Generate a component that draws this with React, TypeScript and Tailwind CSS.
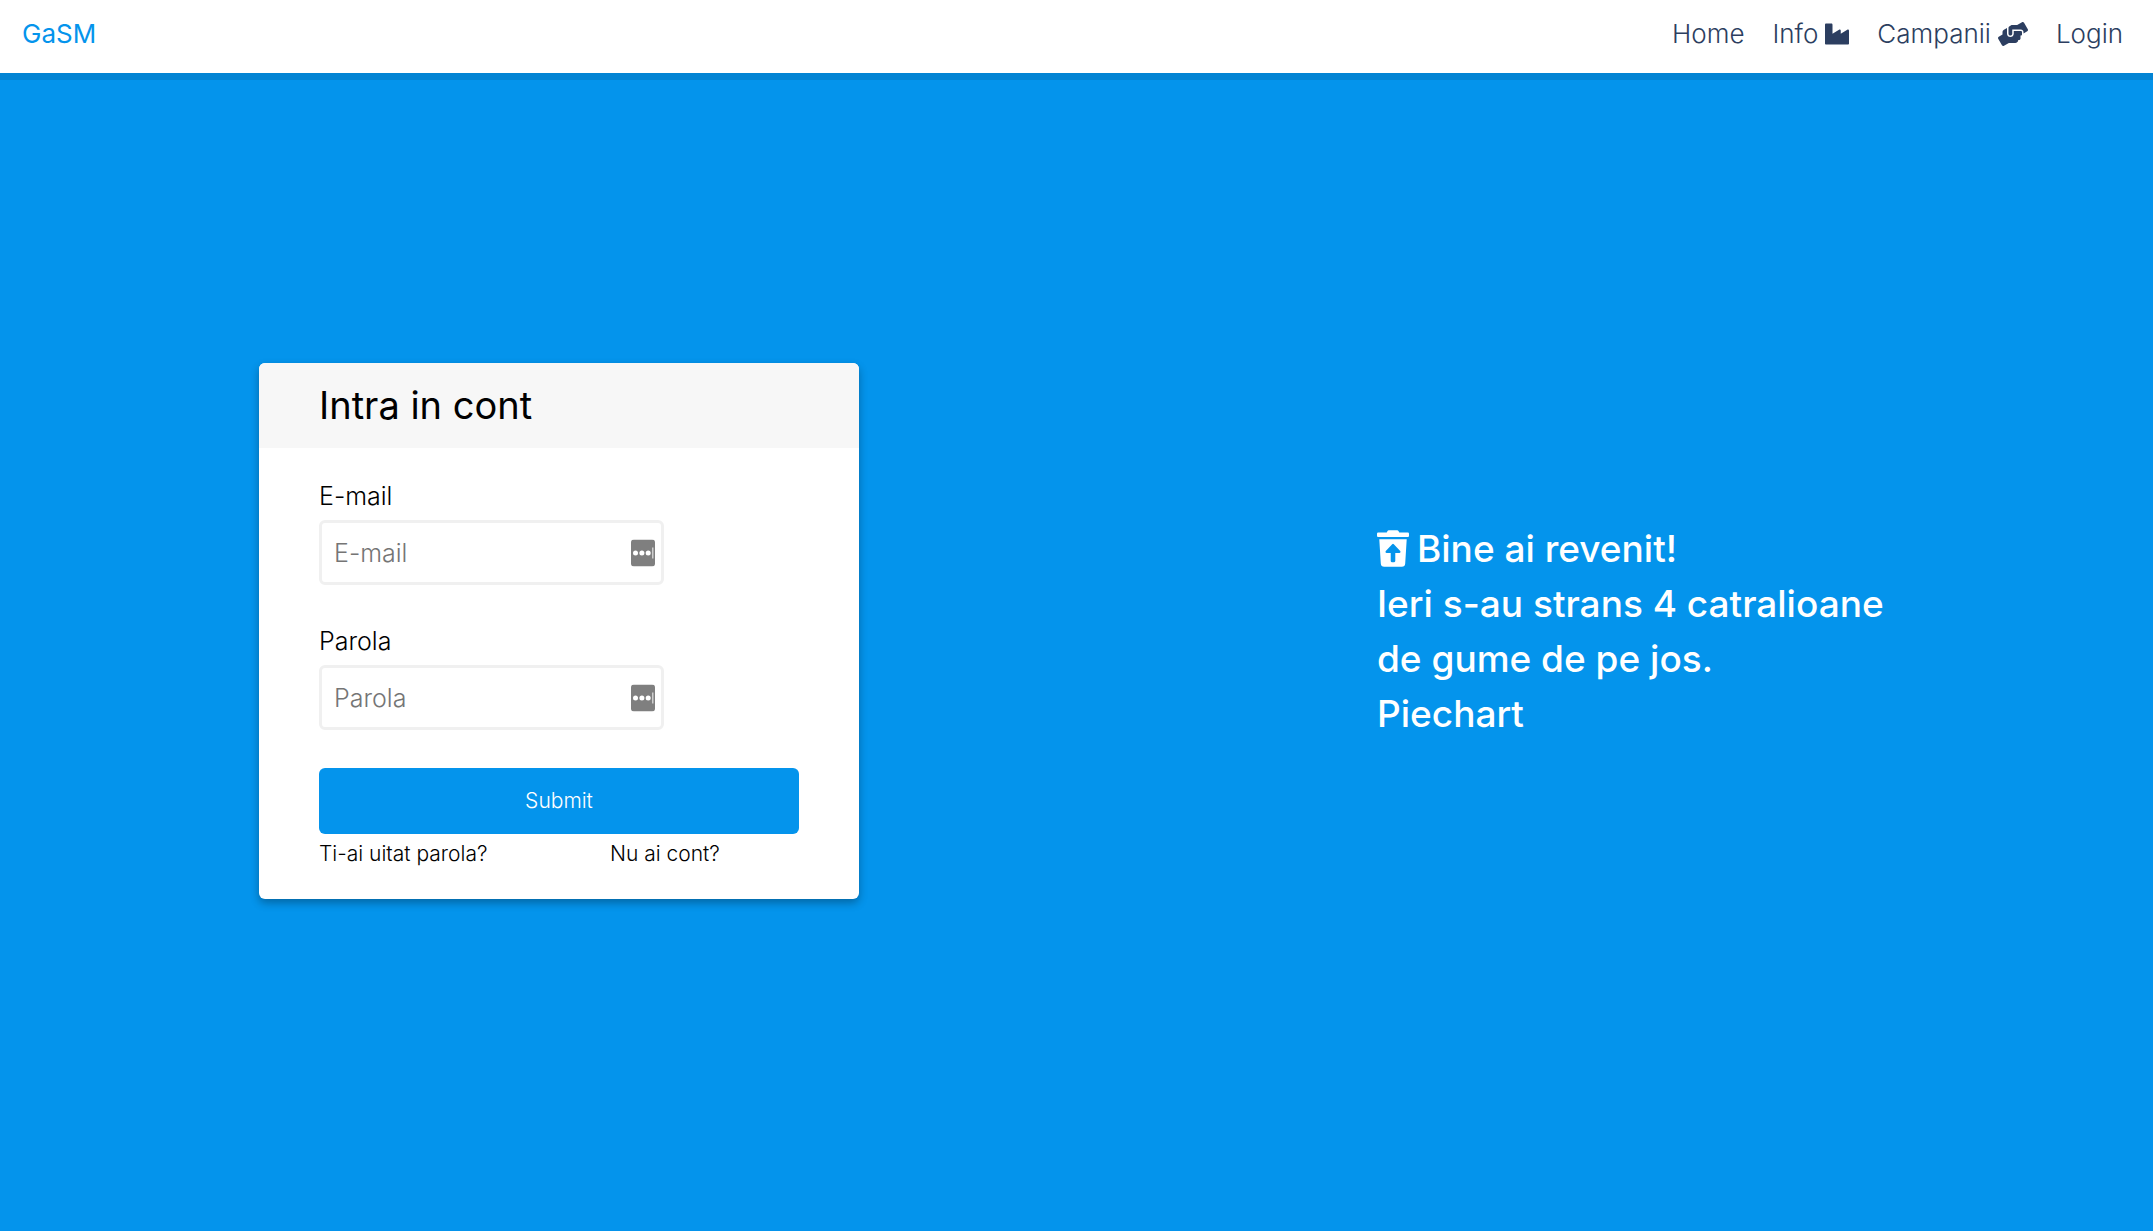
import React from "react";
import { FaHandsHelping, FaIndustry, FaTrashRestore } from "react-icons/fa";

function FieldBadge() {
  return (
    <svg
      className="pointer-events-none absolute top-1/2 right-[9px] h-[27px] w-6 -translate-y-1/2"
      viewBox="0 0 24 27"
      aria-hidden="true"
    >
      <rect width="24" height="27" rx="3" fill="#7f7f7f" />
      <circle cx="4.5" cy="13.5" r="2.5" fill="#fff" />
      <circle cx="10.9" cy="13.5" r="2.5" fill="#fff" />
      <circle cx="17.2" cy="13.5" r="2.5" fill="#fff" />
      <rect x="21.2" y="8" width="1.2" height="11" fill="#e2e2e2" />
    </svg>
  );
}

function Field({ id, type, label }: { id: string; type: string; label: string }) {
  return (
    <div>
      <label htmlFor={id} className="block text-[25px] leading-9">
        {label}
      </label>
      <div className="relative mt-[6px] w-[345px] max-w-full">
        <input
          id={id}
          type={type}
          placeholder={label}
          className="block h-[65px] w-full rounded-md border-[3px] border-[#f0f0f0] bg-white pr-10 pl-3 text-[25px] font-light placeholder:text-[#757575] placeholder:opacity-100"
        />
        <FieldBadge />
      </div>
    </div>
  );
}

export default function App() {
  return (
    <div className="flex min-h-screen flex-col bg-[#0494ec] font-['Inter',sans-serif] font-light text-black">
      <header className="flex h-[73px] items-center justify-between bg-white px-[22px] pb-[6px] shadow-[0_7px_0_rgba(0,0,0,0.1)]">
        <a href="#" className="text-[26px] font-normal text-[#0494ec]">
          GaSM
        </a>
        <nav className="flex items-center gap-7 pr-2 text-[26px] text-[#2c3e60]">
          <a href="#home">Home</a>
          <a href="#info" className="flex items-center gap-[7px]">
            Info <FaIndustry className="h-6 w-6" />
          </a>
          <a href="#campanii" className="flex items-center gap-[7px]">
            Campanii <FaHandsHelping className="h-6 w-[30px]" />
          </a>
          <a href="#login">Login</a>
        </nav>
      </header>

      <main className="flex flex-1 flex-wrap items-center justify-around pb-[42px]">
        <form
          className="w-[600px] max-w-full overflow-hidden rounded-md bg-white shadow-[0_4px_8px_rgba(0,0,0,0.3)]"
          onSubmit={(e) => e.preventDefault()}
        >
          <div className="flex h-[85px] items-center bg-[#f7f7f7] px-[60px]">
            <h1 className="text-[38px] font-normal">Intra in cont</h1>
          </div>
          <div className="px-[60px] pt-[30px] pb-[30px]">
            <div className="flex flex-col gap-[38px]">
              <Field id="email" type="email" label="E-mail" />
              <Field id="parola" type="password" label="Parola" />
              <button
                type="submit"
                className="h-[66px] w-full rounded-md bg-[#0494ec] text-[21px] text-white"
              >
                Submit
              </button>
            </div>
            <div className="mt-1 grid grid-cols-[291px_1fr] text-[21px] leading-[31px]">
              <a href="#reset">Ti-ai uitat parola?</a>
              <a href="#register">Nu ai cont?</a>
            </div>
          </div>
        </form>

        <section className="w-[517px] max-w-full text-[37px] leading-[55px] font-medium text-white">
          <h2 className="flex items-center gap-2">
            <FaTrashRestore className="h-[37px] w-8 shrink-0" /> Bine ai revenit!
          </h2>
          <p>Ieri s-au strans 4 catralioane de gume de pe jos.</p>
          <p>Piechart</p>
        </section>
      </main>
    </div>
  );
}
